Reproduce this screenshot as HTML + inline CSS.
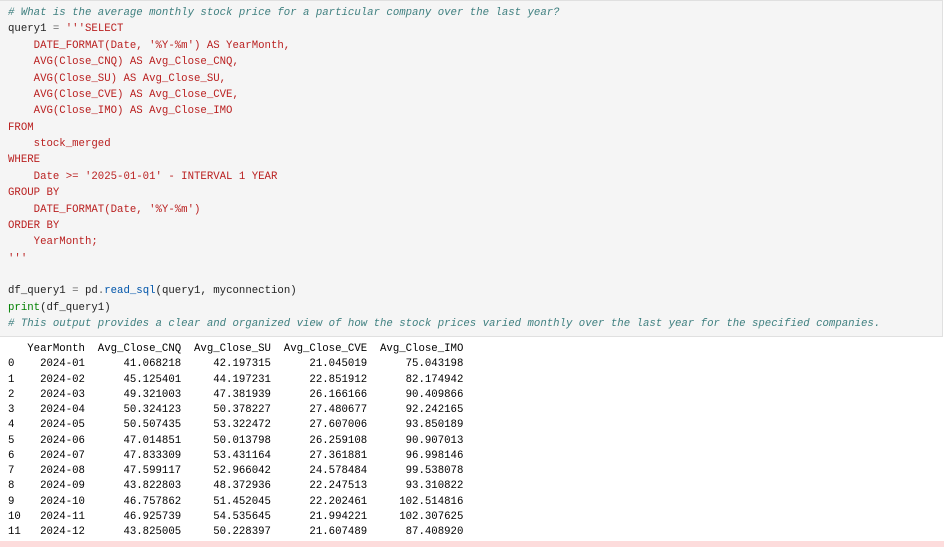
<!DOCTYPE html>
<html><head><style>
body{margin:0;background:#fff;width:944px;height:547px;overflow:hidden;position:relative}
pre{margin:0;font-family:"Liberation Mono",monospace;font-size:10.7px;white-space:pre}
.cell{position:absolute;left:0;top:0;width:942px;height:335px;background:#f5f5f5;border:1px solid #e0e0e0;border-left:none}
.code{position:absolute;left:8px;top:5px;line-height:16.37px;color:#222}
.c{color:#408080;font-style:italic}
.s{color:#ba2121}
.o{color:#666}
.b{color:#008000}
.f{color:#0055aa}
.out{position:absolute;left:8px;top:342px;line-height:15.25px;color:#000}
.pink{position:absolute;left:0;top:541px;width:944px;height:6px;background:#fddcdc}
</style></head><body>
<div class="cell"></div>
<pre class="code"><span class="c"># What is the average monthly stock price for a particular company over the last year?</span>
query1 <span class="o">=</span> <span class="s">'''SELECT
    DATE_FORMAT(Date, '%Y-%m') AS YearMonth,
    AVG(Close_CNQ) AS Avg_Close_CNQ,
    AVG(Close_SU) AS Avg_Close_SU,
    AVG(Close_CVE) AS Avg_Close_CVE,
    AVG(Close_IMO) AS Avg_Close_IMO
FROM
    stock_merged
WHERE
    Date &gt;= '2025-01-01' - INTERVAL 1 YEAR
GROUP BY
    DATE_FORMAT(Date, '%Y-%m')
ORDER BY
    YearMonth;
'''</span>

df_query1 <span class="o">=</span> pd<span class="o">.</span><span class="f">read_sql</span>(query1, myconnection)
<span class="b">print</span>(df_query1)
<span class="c"># This output provides a clear and organized view of how the stock prices varied monthly over the last year for the specified companies.</span></pre>
<pre class="out">   YearMonth  Avg_Close_CNQ  Avg_Close_SU  Avg_Close_CVE  Avg_Close_IMO
0    2024-01      41.068218     42.197315      21.045019      75.043198
1    2024-02      45.125401     44.197231      22.851912      82.174942
2    2024-03      49.321003     47.381939      26.166166      90.409866
3    2024-04      50.324123     50.378227      27.480677      92.242165
4    2024-05      50.507435     53.322472      27.607006      93.850189
5    2024-06      47.014851     50.013798      26.259108      90.907013
6    2024-07      47.833309     53.431164      27.361881      96.998146
7    2024-08      47.599117     52.966042      24.578484      99.538078
8    2024-09      43.822803     48.372936      22.247513      93.310822
9    2024-10      46.757862     51.452045      22.202461     102.514816
10   2024-11      46.925739     54.535645      21.994221     102.307625
11   2024-12      43.825005     50.228397      21.607489      87.408920</pre>
<div class="pink"></div>
</body></html>
